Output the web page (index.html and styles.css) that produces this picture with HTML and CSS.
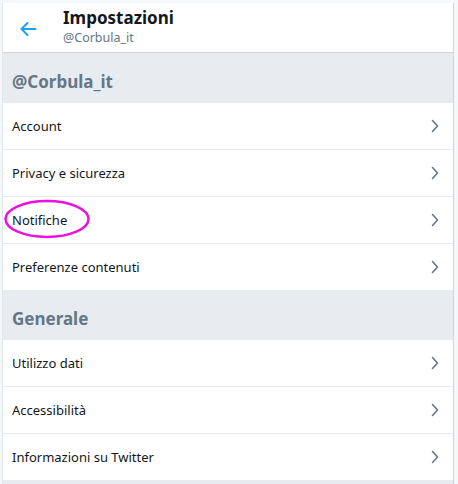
FILE: index.html
```html
<!DOCTYPE html>
<html lang="it">
<head>
<meta charset="utf-8">
<title>Impostazioni</title>
<link rel="stylesheet" href="styles.css">
</head>
<body>
<div class="panel">
  <header class="topbar">
    <div class="back">
      <svg width="18" height="16" viewBox="0 0 18 16"><path d="M16.5 8H2.5M8.5 2L2.5 8l6 6" fill="none" stroke="#1da1f2" stroke-width="2" stroke-linecap="round" stroke-linejoin="round"/></svg>
    </div>
    <div class="titles">
      <div class="title">Impostazioni</div>
      <div class="subtitle">@Corbula_it</div>
    </div>
  </header>
  <div class="section">@Corbula_it</div>
  <ul class="list">
    <li class="row"><span>Account</span><svg class="chev" width="8" height="14" viewBox="0 0 8 14"><path d="M1.5 1.5L6.5 7l-5 5.5" fill="none" stroke="#657786" stroke-width="1.6" stroke-linecap="round" stroke-linejoin="round"/></svg></li>
    <li class="row"><span>Privacy e sicurezza</span><svg class="chev" width="8" height="14" viewBox="0 0 8 14"><path d="M1.5 1.5L6.5 7l-5 5.5" fill="none" stroke="#657786" stroke-width="1.6" stroke-linecap="round" stroke-linejoin="round"/></svg></li>
    <li class="row marked"><span>Notifiche</span><svg class="chev" width="8" height="14" viewBox="0 0 8 14"><path d="M1.5 1.5L6.5 7l-5 5.5" fill="none" stroke="#657786" stroke-width="1.6" stroke-linecap="round" stroke-linejoin="round"/></svg><svg class="ring" width="88" height="40" viewBox="0 0 88 40"><ellipse cx="43" cy="20" rx="41.5" ry="18" fill="none" stroke="#ee10dd" stroke-width="2.5"/></svg></li>
    <li class="row"><span>Preferenze contenuti</span><svg class="chev" width="8" height="14" viewBox="0 0 8 14"><path d="M1.5 1.5L6.5 7l-5 5.5" fill="none" stroke="#657786" stroke-width="1.6" stroke-linecap="round" stroke-linejoin="round"/></svg></li>
  </ul>
  <div class="section">Generale</div>
  <ul class="list">
    <li class="row"><span>Utilizzo dati</span><svg class="chev" width="8" height="14" viewBox="0 0 8 14"><path d="M1.5 1.5L6.5 7l-5 5.5" fill="none" stroke="#657786" stroke-width="1.6" stroke-linecap="round" stroke-linejoin="round"/></svg></li>
    <li class="row"><span>Accessibilità</span><svg class="chev" width="8" height="14" viewBox="0 0 8 14"><path d="M1.5 1.5L6.5 7l-5 5.5" fill="none" stroke="#657786" stroke-width="1.6" stroke-linecap="round" stroke-linejoin="round"/></svg></li>
    <li class="row"><span>Informazioni su Twitter</span><svg class="chev" width="8" height="14" viewBox="0 0 8 14"><path d="M1.5 1.5L6.5 7l-5 5.5" fill="none" stroke="#657786" stroke-width="1.6" stroke-linecap="round" stroke-linejoin="round"/></svg></li>
  </ul>
  <div class="footer"></div>
</div>
</body>
</html>
```
FILE: styles.css
```css
html, body {
  margin: 0;
  padding: 0;
}
body {
  background: #f5f8fa;
  font-family: "Noto Sans", "Open Sans", sans-serif;
  color: #14171a;
  height: 484px;
  overflow: hidden;
}
.panel {
  margin: 3px 4px 0 2px;
  background: #e6ecf0;
  border-left: 1px solid #e1e8ed;
  border-right: 1px solid #ccd6dd;
  height: 481px;
}
.topbar {
  display: flex;
  align-items: center;
  height: 50px;
  background: #fff;
  border-bottom: 1px solid #ccd6dd;
  box-sizing: border-box;
}
.back {
  width: 60px;
  display: flex;
  align-items: center;
  padding-left: 16px;
  padding-top: 3px;
  box-sizing: border-box;
}
.titles {
  display: flex;
  flex-direction: column;
  margin-top: -2px;
}
.title {
  font-size: 17px;
  font-weight: 700;
  line-height: 22px;
  color: #14171a;
}
.subtitle {
  font-size: 12.5px;
  line-height: 18px;
  color: #657786;
}
.section {
  height: 50px;
  box-sizing: border-box;
  padding: 17px 0 0 9px;
  font-size: 17px;
  font-weight: 700;
  line-height: 24px;
  color: #657786;
  background: #e6ecf0;
}
.list {
  list-style: none;
  margin: 0;
  padding: 0;
  background: #fff;
}
.row {
  position: relative;
  display: flex;
  align-items: center;
  justify-content: space-between;
  height: 47px;
  box-sizing: border-box;
  padding: 0 14px 0 9px;
  font-size: 13px;
  border-bottom: 1px solid #e6ecf0;
}
.row:last-child {
  border-bottom: none;
  height: 46px;
}
.chev {
  display: block;
}
.ring {
  position: absolute;
  left: 1px;
  top: 2px;
}
.footer {
  height: 4px;
  background: #e6ecf0;
}
```
